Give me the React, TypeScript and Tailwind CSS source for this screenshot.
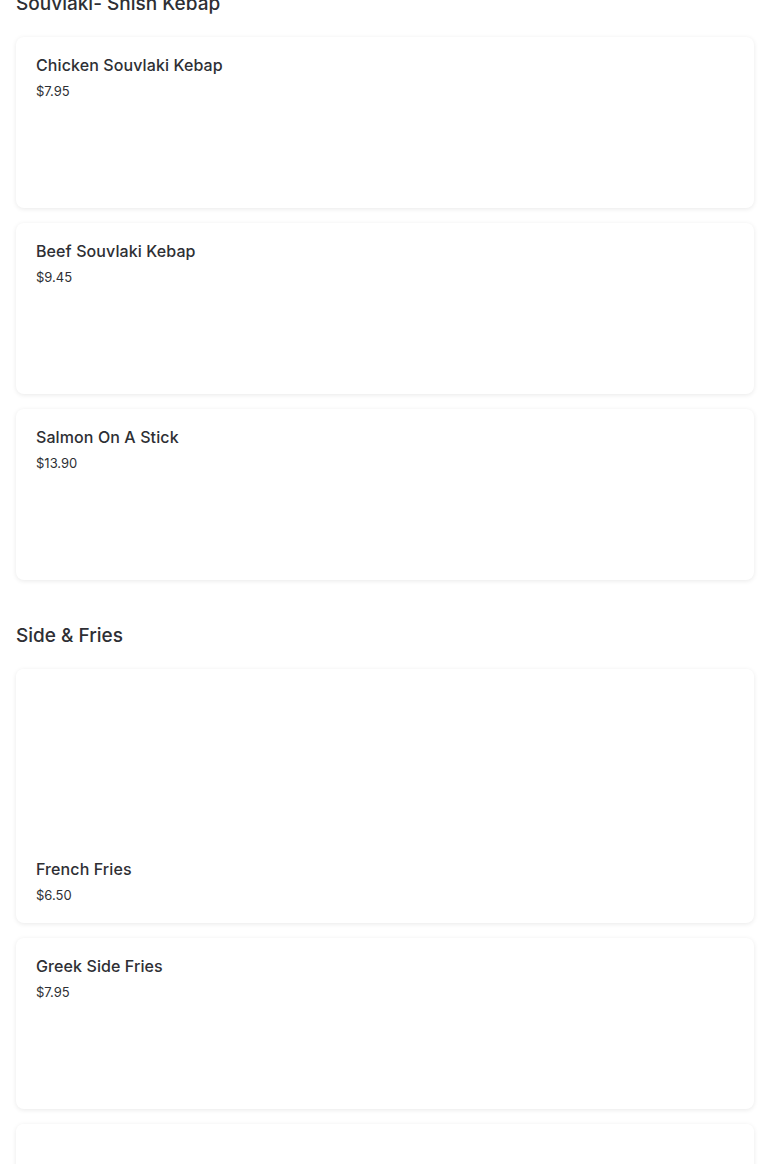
type Item = { name?: string; price?: string; image?: boolean };

const sections: { title: string; items: Item[] }[] = [
  {
    title: 'Souvlaki- Shish Kebap',
    items: [
      { name: 'Chicken Souvlaki Kebap', price: '$7.95' },
      { name: 'Beef Souvlaki Kebap', price: '$9.45' },
      { name: 'Salmon On A Stick', price: '$13.90' },
    ],
  },
  {
    title: 'Side & Fries',
    items: [
      { name: 'French Fries', price: '$6.50', image: true },
      { name: 'Greek Side Fries', price: '$7.95' },
      { image: true },
    ],
  },
];

function MenuCard({ item }: { item: Item }) {
  return (
    <div className="flex flex-col rounded-lg bg-white shadow-[0_1px_5px_rgba(0,0,0,0.09)]">
      {item.image && <div className="h-[172px] rounded-t-lg bg-white" />}
      {item.name && (
        <div className={item.image ? 'px-5 pt-[18px] pb-[20px]' : 'h-[171px] px-5 pt-[18px]'}>
          <p className="text-[16px] leading-[20px] font-medium tracking-[0.1px] text-[#2e2f34]">{item.name}</p>
          <p className="mt-[8px] text-[13px] leading-[16px] text-[#2e2f34]">{item.price}</p>
        </div>
      )}
    </div>
  );
}

export default function App() {
  return (
    <div className="min-h-screen bg-white font-['Inter',sans-serif] overflow-hidden">
      <div className="-mt-[10px] flex flex-col gap-[42px] px-4">
        {sections.map((s) => (
          <section key={s.title} className="flex flex-col">
            <h2 className="text-[19px] leading-[28px] font-medium text-[#2e2f34]">{s.title}</h2>
            <div className="mt-[19px] flex flex-col gap-[15px]">
              {s.items.map((it, i) => (
                <MenuCard key={i} item={it} />
              ))}
            </div>
          </section>
        ))}
      </div>
    </div>
  );
}
